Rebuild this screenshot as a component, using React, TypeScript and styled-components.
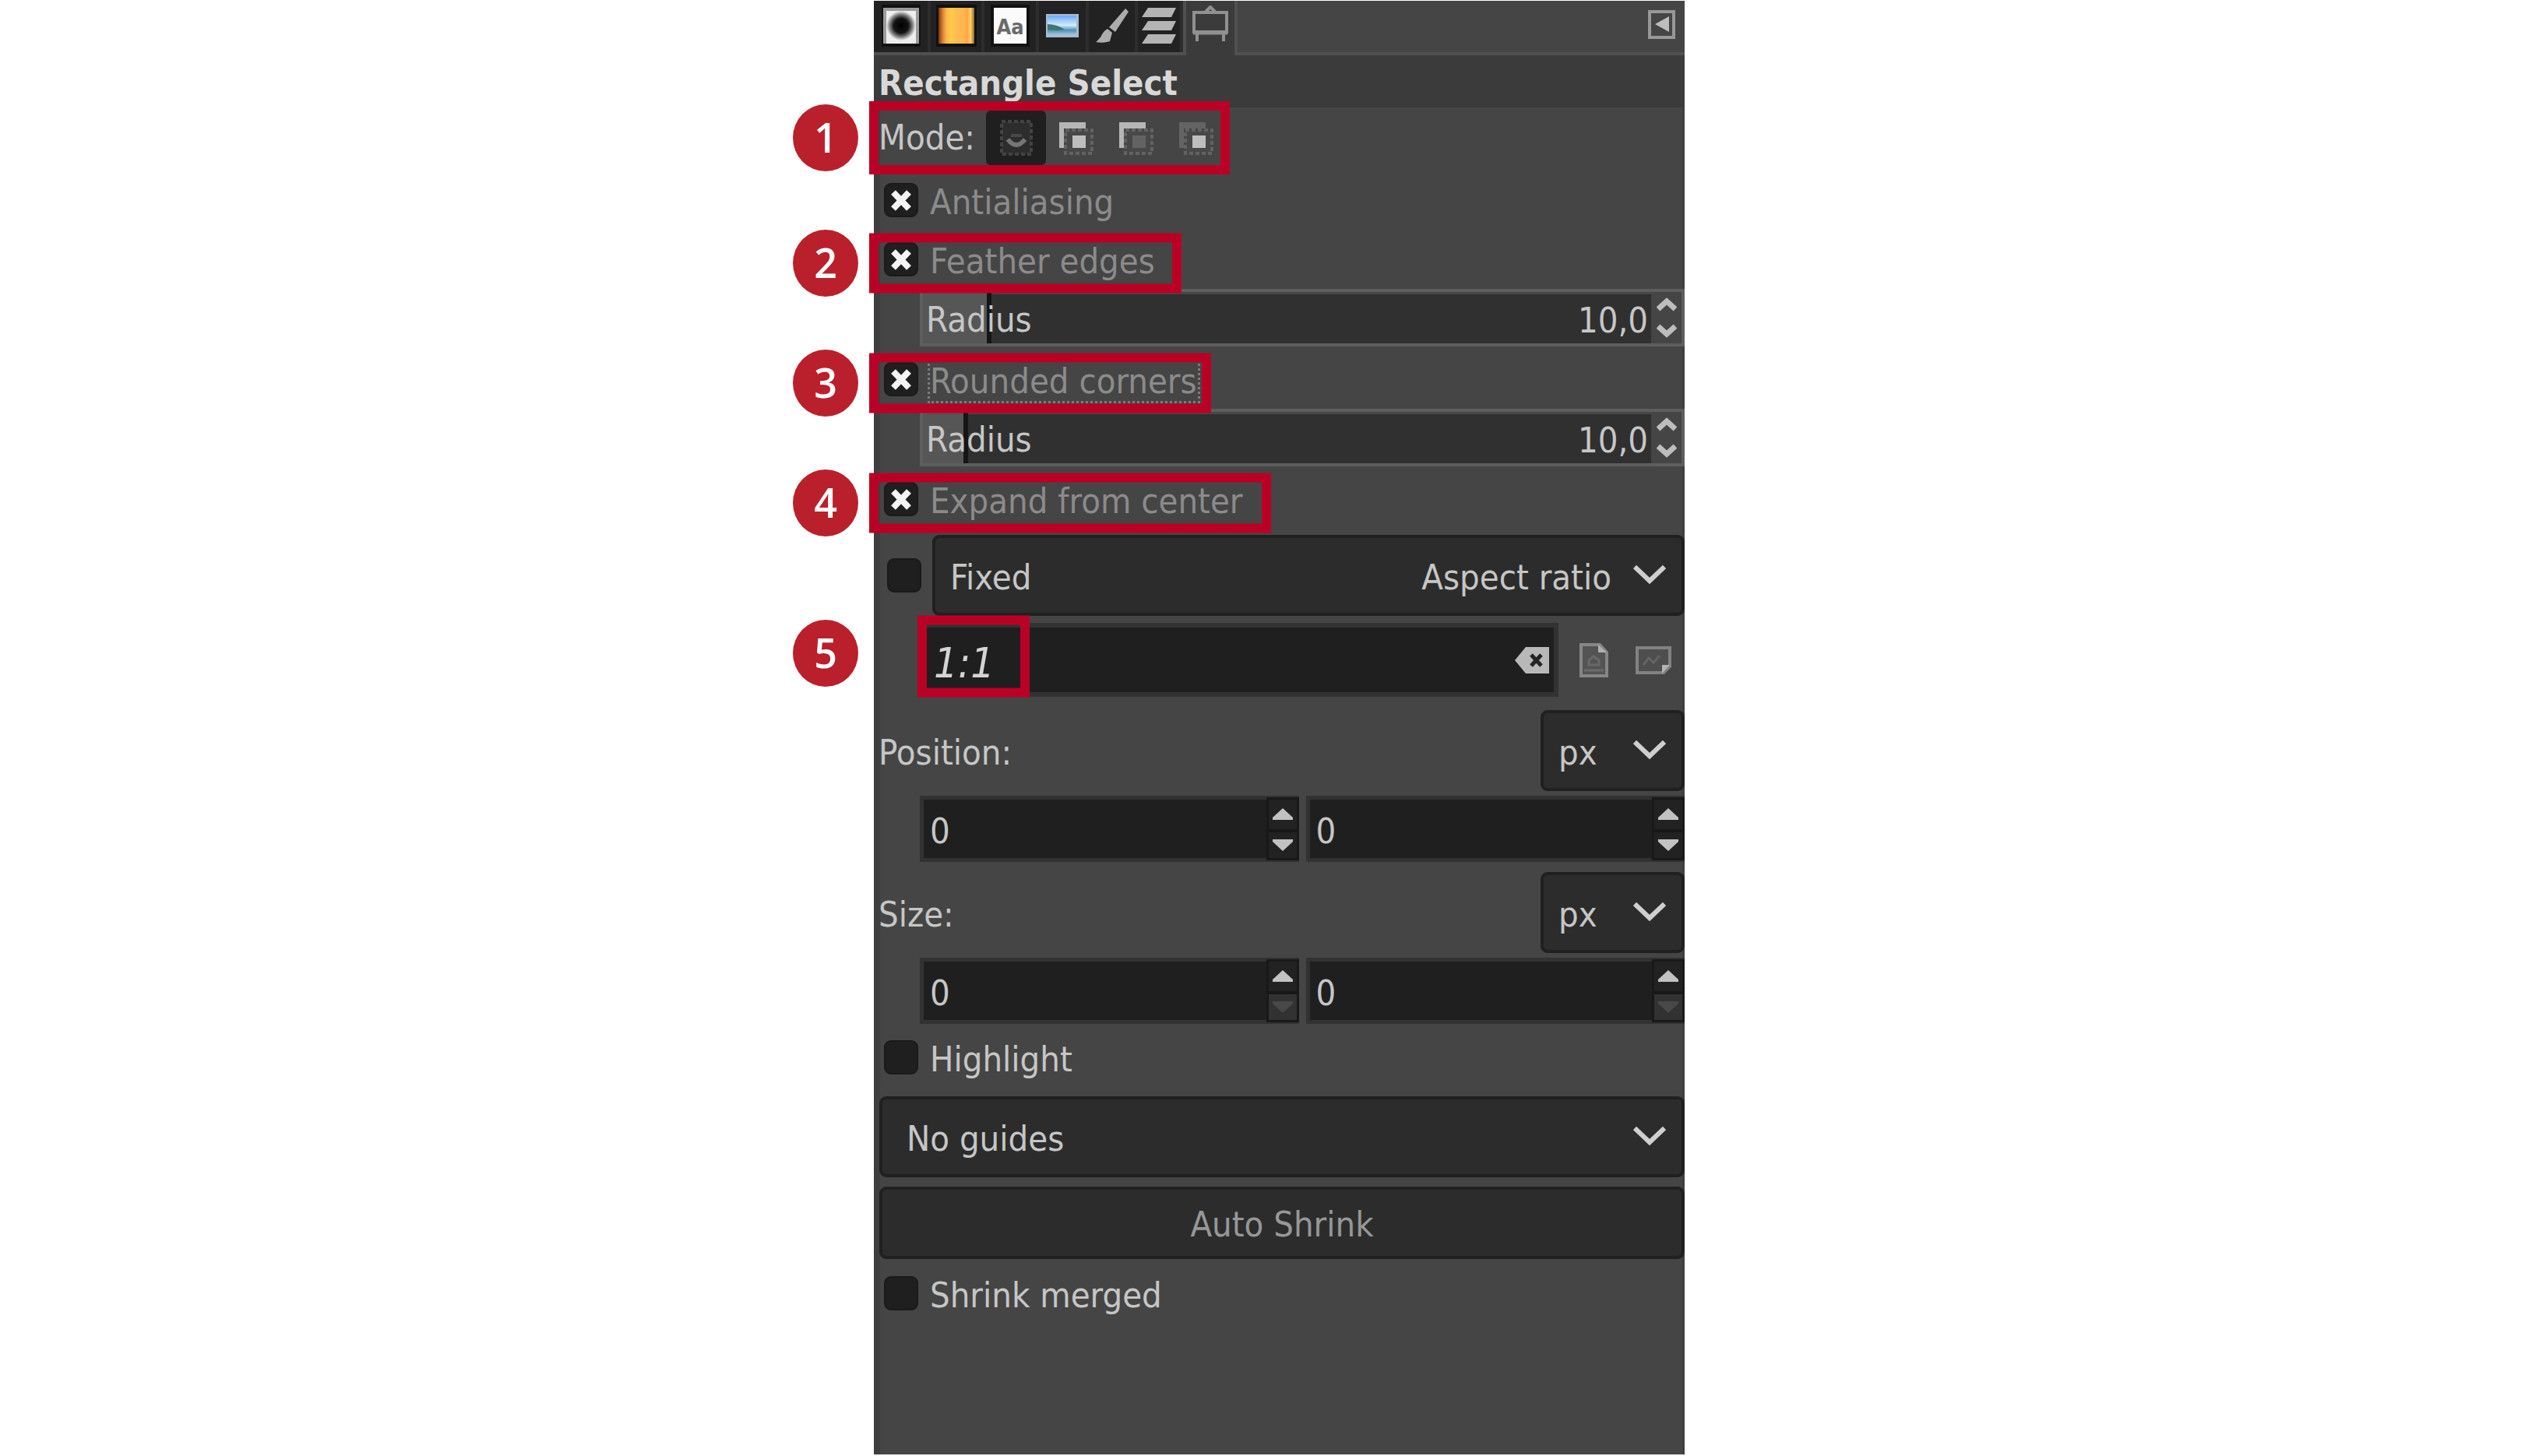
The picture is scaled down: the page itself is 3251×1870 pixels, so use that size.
import React, { useState } from 'react';
import styled, { createGlobalStyle, css } from 'styled-components';

const c = {
  panel: '#454545',
  header: '#3b3b3b',
  edge: '#3e3e3e',
  line: '#505050',
  tab: '#222222',
  button: '#2c2c2c',
  buttonEdge: '#202020',
  field: '#1f1f1f',
  fieldEdge: '#323232',
  text: '#c6c6c6',
  dim: '#8b8b8b',
  icon: '#b4b4b4',
  red: '#bb0026',
  badge: '#ba202c',
};

const Global = createGlobalStyle`
  *, *::before, *::after { box-sizing: border-box; }
  body { margin: 0; background: #fff; }
  body, button, input, select {
    font-family: "DejaVu Sans Condensed", "Open Sans", "Noto Sans", sans-serif;
    font-size: 45px;
    line-height: 52px;
    color: ${c.text};
  }
  button, input, select { margin: 0; padding: 0; border: 0; background: none; border-radius: 0; }
  svg { display: block; flex: none; }
`;

const Page = styled.main`
  display: grid;
  grid-template-columns: 1122fr 1041fr 1088fr;
  min-height: 100vh;
  padding: 1px 0 2px;
`;

const Panel = styled.section`
  grid-column: 2;
  display: flex;
  flex-direction: column;
  min-width: 0;
  background: ${c.panel};
  box-shadow: inset 8px 0 ${c.edge}, inset -3px 0 ${c.edge};
`;

const TabStrip = styled.nav`
  display: flex;
  align-items: stretch;
  height: 70px;
  background: ${c.panel};
  border-bottom: 4px solid ${c.line};
`;

const Tab = styled.button<{ $w: number; $active?: boolean }>`
  display: flex;
  align-items: center;
  justify-content: center;
  width: ${p => p.$w}px;
  padding-bottom: 2px;
  background: ${c.tab};
  border-right: 4px solid #2d2d2d;
  ${p => p.$active && css`
    margin-bottom: -4px;
    padding-bottom: 12px;
    background: ${c.header};
    border-left: 4px solid ${c.line};
    border-right-color: ${c.line};
  `}
`;

const MenuButton = styled.button`
  margin-left: auto;
  margin-right: 11px;
  padding-bottom: 4px;
`;

const Title = styled.h1`
  margin: 0;
  height: 67px;
  padding: 6px 0 0 6px;
  background: ${c.header};
  font-size: 45px;
  line-height: 60px;
  font-weight: 700;
  color: #d8d8d8;
`;

const Body = styled.form`
  display: flex;
  flex-direction: column;
  padding-left: 5px;
`;

const Row = styled.div<{ $h: number; $mt?: number; $pl?: number }>`
  position: relative;
  display: flex;
  align-items: center;
  height: ${p => p.$h}px;
  margin-top: ${p => p.$mt ?? 0}px;
  padding-left: ${p => p.$pl ?? 0}px;
`;

const Caption = styled.span<{ $dim?: boolean }>`
  padding-top: 6px;
  white-space: nowrap;
  color: ${p => (p.$dim ? c.dim : c.text)};
`;

const UnitCaption = styled.label`
  flex: 1;
  padding-top: 6px;
`;

const ModeGroup = styled.div`
  display: flex;
  margin-left: auto;
`;

const ModeArea = styled.div`
  display: flex;
  align-items: center;
  width: 446px;
`;

const ModeButton = styled.button`
  display: flex;
  align-items: center;
  justify-content: center;
  width: 77px;
  height: 70px;
  border-radius: 6px;
  &[aria-pressed='true'] { background: ${c.field}; }
`;

/* Callouts drawn over the panel */
const Outline = styled.span<{ $w: number; $h: number; $x?: number; $dy?: number }>`
  position: absolute;
  z-index: 2;
  left: ${p => p.$x ?? -11}px;
  top: calc(50% + ${p => p.$dy ?? 0}px);
  width: ${p => p.$w}px;
  height: ${p => p.$h}px;
  transform: translateY(-50%);
  border: 12px solid ${c.red};
  pointer-events: none;
`;

const Badge = styled.span<{ $dy?: number }>`
  position: absolute;
  left: -109px;
  top: calc(50% + ${p => p.$dy ?? 0}px);
  width: 84px;
  height: 86px;
  transform: translateY(-50%);
  border-radius: 50%;
  background: ${c.badge};
  color: #fff;
  font-family: "Open Sans", "Noto Sans", sans-serif;
  font-size: 52px;
  font-weight: 600;
  line-height: 84px;
  text-align: center;
`;

const CheckLabel = styled.label`
  display: flex;
  align-items: center;
  gap: 15px;
`;

const CheckBoxFrame = styled.span`
  position: relative;
  display: block;
  width: 44px;
  height: 44px;
  svg { position: absolute; inset: 0; pointer-events: none; }
`;

const CheckInput = styled.input`
  appearance: none;
  display: block;
  width: 44px;
  height: 44px;
  border-radius: 9px;
  background: ${c.field};
  border: 2px solid #1a1a1a;
`;

const FocusRing = styled.span`
  position: relative;
  display: flex;
  &::after {
    content: '';
    position: absolute;
    inset: 2px -4px -2px -3px;
    border: 3px dotted #7c7c7c;
  }
`;

const Slider = styled.div`
  position: relative;
  display: flex;
  align-items: center;
  height: 74px;
  margin-left: 54px;
  padding-left: 4px;
  background: #303030;
  border: 4px solid #5e5e5e;
  box-shadow: inset 0 3px #474747;
`;

const SliderFill = styled.span`
  position: absolute;
  left: 0;
  top: 0;
  bottom: 0;
  background: #565656;
  border-right: 6px solid #151515;
`;

const SliderLabel = styled.label`
  position: relative;
  padding-top: 6px;
`;

const SliderValue = styled.input`
  position: relative;
  flex: 1;
  min-width: 0;
  height: 66px;
  padding: 6px 4px 0 0;
  text-align: right;
`;

const Steppers = styled.div`
  display: flex;
  flex-direction: column;
  justify-content: center;
  gap: 14px;
  align-self: stretch;
  width: 39px;
  background: #454545;
  button { display: flex; justify-content: center; }
`;

const Combo = styled.div<{ $ml?: number; $w?: number }>`
  position: relative;
  display: flex;
  align-items: center;
  ${p => (p.$w ? `width: ${p.$w}px;` : 'flex: 1;')}
  height: 104px;
  margin-left: ${p => p.$ml ?? 0}px;
  background: ${c.button};
  border: 4px solid ${c.buttonEdge};
  border-radius: 9px;
  svg { position: absolute; right: 20px; top: 34px; pointer-events: none; }
`;

const ComboLabel = styled.label`
  padding: 6px 0 0 19px;
`;

const ComboSelect = styled.select<{ $right?: boolean; $pl?: number }>`
  appearance: none;
  flex: 1;
  min-width: 0;
  height: 96px;
  padding: 6px ${p => (p.$right ? 90 : 60)}px 0 ${p => p.$pl ?? 0}px;
  ${p => p.$right && 'text-align-last: right;'}
`;

const Entry = styled.div`
  display: flex;
  align-items: center;
  width: 820px;
  height: 95px;
  background: ${c.field};
  border: 6px solid ${c.fieldEdge};
`;

const RatioInput = styled.input`
  flex: 1;
  min-width: 0;
  height: 83px;
  padding: 8px 0 0 12px;
  font-size: 54px;
  font-style: italic;
  color: #d4d4d4;
`;

const IconButton = styled.button<{ $ml?: number; $mr?: number }>`
  display: flex;
  margin-left: ${p => p.$ml ?? 0}px;
  margin-right: ${p => p.$mr ?? 0}px;
`;

const Pair = styled.div`
  display: grid;
  grid-template-columns: 1fr 1fr;
  gap: 9px;
  height: 85px;
  margin: 6px 0 0 54px;
`;

const SpinBox = styled.div`
  display: flex;
  min-width: 0;
  background: ${c.field};
  border: 5px solid ${c.fieldEdge};
  border-right-width: 0;
`;

const SpinInput = styled.input`
  flex: 1;
  min-width: 0;
  padding: 6px 0 0 8px;
`;

const SpinButtons = styled.div`
  display: grid;
  grid-template-rows: 1fr 1fr;
  width: 42px;
  margin: -3px 0 -3px;
  border: 3px solid #191919;
  button { display: flex; align-items: center; justify-content: center; background: #222; }
  button + button { border-top: 4px solid #171717; }
  button:disabled { background: #323232; }
`;

const WideButton = styled.button`
  height: 93px;
  margin: 12px 0 0 2px;
  padding-top: 4px;
  background: ${c.button};
  border: 4px solid ${c.buttonEdge};
  border-radius: 9px;
  color: #979797;
`;

const Chevron = () => (
  <svg width="42" height="26" viewBox="0 0 42 26" fill="none" stroke="#cfcfcf" strokeWidth="6">
    <path d="M2 3 L21 21 L40 3" />
  </svg>
);

const Cross = () => (
  <svg width="44" height="44" viewBox="0 0 44 44" fill="none" stroke="#f4f4f4" strokeWidth="8">
    <path d="M12 12 L32 33 M32 12 L12 33" />
  </svg>
);

const Angle = ({ down }: { down?: boolean }) => (
  <svg width="26" height="19" viewBox="0 0 26 19" fill="none" stroke="#bdbdbd" strokeWidth="7">
    <path d={down ? 'M2 4 L13 14 L24 4' : 'M2 15 L13 5 L24 15'} />
  </svg>
);

const Triangle = ({ down, color = '#c2c2c2' }: { down?: boolean; color?: string }) => (
  <svg width="26" height="15" viewBox="0 0 26 15" fill={color}>
    <path d={down ? 'M0 0 H26 V3 L13 15 L0 3 Z' : 'M0 15 H26 V12 L13 0 L0 12 Z'} />
  </svg>
);

const BrushIcon = () => (
  <svg width="50" height="54" viewBox="0 0 50 54">
    <defs>
      <radialGradient id="brush">
        <stop offset="0" stopColor="#000" />
        <stop offset="0.5" stopColor="#141414" />
        <stop offset="0.75" stopColor="#777" />
        <stop offset="1" stopColor="#eee" />
      </radialGradient>
    </defs>
    <rect width="50" height="54" fill="#111" />
    <rect x="2" y="4" width="46" height="46" fill="#9c9c9c" />
    <rect x="6" y="8" width="38" height="42" fill="#eee" />
    <circle cx="25" cy="27" r="19" fill="url(#brush)" />
  </svg>
);

const PatternIcon = () => (
  <svg width="52" height="54" viewBox="0 0 52 54">
    <defs>
      <linearGradient id="wood">
        <stop offset="0" stopColor="#7a3a06" />
        <stop offset="0.12" stopColor="#dd813a" />
        <stop offset="0.22" stopColor="#ffb54a" />
        <stop offset="0.34" stopColor="#ffcd47" />
        <stop offset="0.5" stopColor="#ffbb50" />
        <stop offset="0.72" stopColor="#ffb74e" />
        <stop offset="0.8" stopColor="#ffa445" />
        <stop offset="0.9" stopColor="#ffd168" />
        <stop offset="1" stopColor="#8a6526" />
      </linearGradient>
    </defs>
    <rect width="52" height="54" fill="#111" />
    <rect x="3" y="4" width="46" height="46" fill="url(#wood)" />
  </svg>
);

const FontSwatch = styled.span`
  width: 50px;
  height: 54px;
  border: 4px solid #111;
  background: #fafafa;
  color: #6a6a6a;
  font-size: 27px;
  font-weight: 700;
  line-height: 50px;
  text-align: center;
`;

const ImageIcon = () => (
  <svg width="42" height="30" viewBox="0 0 42 30">
    <defs>
      <linearGradient id="sky" x2="0" y2="1">
        <stop offset="0" stopColor="#6ea6fa" />
        <stop offset="0.5" stopColor="#d3ebfb" />
        <stop offset="0.75" stopColor="#4f8fb8" />
        <stop offset="1" stopColor="#a9c6dd" />
      </linearGradient>
    </defs>
    <rect width="42" height="30" fill="#a8bccf" />
    <rect x="2" y="2" width="37" height="25" fill="url(#sky)" />
    <path d="M2 13 Q14 13 24 20 Q12 22 2 20 Z" fill="#40766f" />
  </svg>
);

const PaintIcon = () => (
  <svg width="42" height="44" viewBox="0 0 42 44" fill="#adadad">
    <path d="M38 0 L42 4 L25 30 L17 24 Z" />
    <path d="M15 26 L21 31 L18 42 Q10 45 0 43 Q6 38 8 33 Q11 28 15 26 Z" />
  </svg>
);

const LayersIcon = () => (
  <svg width="44" height="46" viewBox="0 0 44 46" fill={c.icon}>
    <path d="M8 0 H44 L38 12 H0 Z M8 17 H44 L38 29 H0 Z M8 34 H44 L38 46 H0 Z" />
  </svg>
);

const EaselIcon = () => (
  <svg width="48" height="46" viewBox="0 0 48 46" fill="none" stroke="#909090" strokeWidth="4">
    <path d="M3 9 H45 V34 H3 Z M7 36 V46 M41 36 V46" />
    <path d="M18 8 L24 2 L30 8" />
    <path d="M2 35 H46" strokeWidth="5" />
  </svg>
);

const MenuIcon = () => (
  <svg width="36" height="38" viewBox="0 0 36 38">
    <rect x="2" y="2" width="31" height="33" fill="none" stroke="#989898" strokeWidth="4" />
    <path d="M27 8 V28 L9 18 Z" fill="#bdbdbd" />
  </svg>
);

const modes = [
  { name: 'Replace the current selection', corner: 'none', square: 'none' },
  { name: 'Add to the current selection', corner: '#b6b6b6', square: '#bebebe' },
  { name: 'Subtract from the current selection', corner: '#b6b6b6', square: '#636363' },
  { name: 'Intersect with the current selection', corner: '#646464', square: '#bebebe' },
];

const ModeIcon = ({ index }: { index: number }) => {
  const m = modes[index];
  if (index === 0) {
    return (
      <svg width="46" height="48" viewBox="0 0 46 48" fill="none">
        <rect x="4" y="3" width="38" height="42" fill="#2d2d2d" stroke="#434343" strokeWidth="4" strokeDasharray="5 3" />
        <path d="M12 26 Q23 40 34 26" stroke="#767676" strokeWidth="6" />
        <path d="M16 21 H30" stroke="#484848" strokeWidth="4" />
      </svg>
    );
  }
  return (
    <svg width="46" height="48" viewBox="0 0 46 48">
      <path d="M1 4 H35 V12 H7 V37 H1 Z" fill={m.corner} />
      <rect x="9" y="14" width="34" height="30" fill="#484848" stroke="#626262" strokeWidth="4" strokeDasharray="5 3" />
      <rect x="18" y="21" width="17" height="16" fill={m.square} />
    </svg>
  );
};

const ClearIcon = () => (
  <svg width="44" height="38" viewBox="0 0 44 38">
    <path d="M0 19 L14 2 H44 V36 H14 Z" fill="#b8b8b8" />
    <path d="M21 12 L34 26 M34 12 L21 26" stroke="#242424" strokeWidth="5" />
  </svg>
);

const PortraitIcon = () => (
  <svg width="38" height="46" viewBox="0 0 38 46">
    <path d="M3 3 H27 L36 13 V43 H3 Z" fill="#545454" stroke="#868686" strokeWidth="4" />
    <path d="M25 3 V13 H36 Z" fill="#b0b0b0" />
    <path d="M13 29 H26 V23 L19 18 L13 23 Z" fill="none" stroke="#686868" strokeWidth="3" />
    <path d="M7 36 H32" stroke="#6c6c6c" strokeWidth="3" />
  </svg>
);

const LandscapeIcon = () => (
  <svg width="46" height="38" viewBox="0 0 46 38">
    <path d="M2 3 H44 V27 L36 35 H2 Z" fill="#4e4e4e" stroke="#828282" strokeWidth="4" />
    <path d="M44 25 H34 V36 Z" fill="#b4b4b4" />
    <path d="M10 25 L17 16 L23 22 L31 13" fill="none" stroke="#646464" strokeWidth="3" />
  </svg>
);

interface CheckProps {
  id: string;
  label: string;
  on?: boolean;
  dim?: boolean;
  focused?: boolean;
  mt?: number;
  children?: React.ReactNode;
}

const Check = ({ id, on }: { id: string; on?: boolean }) => {
  const [checked, setChecked] = useState(!!on);
  return (
    <CheckBoxFrame>
      <CheckInput id={id} type="checkbox" checked={checked} onChange={e => setChecked(e.target.checked)} />
      {checked && <Cross />}
    </CheckBoxFrame>
  );
};

const CheckRow = ({ id, label, on, dim, focused, mt, children }: CheckProps) => (
  <Row $h={76} $mt={mt} $pl={8}>
    <CheckLabel htmlFor={id}>
      <Check id={id} on={on} />
      {focused ? (
        <FocusRing><Caption $dim={dim}>{label}</Caption></FocusRing>
      ) : (
        <Caption $dim={dim}>{label}</Caption>
      )}
    </CheckLabel>
    {children}
  </Row>
);

const RadiusSlider = ({ id, fill }: { id: string; fill: number }) => (
  <Slider>
    <SliderFill style={{ width: `${fill}%` }} />
    <SliderLabel htmlFor={id}>Radius</SliderLabel>
    <SliderValue id={id} defaultValue="10,0" />
    <Steppers>
      <button type="button" aria-label="Increase radius"><Angle /></button>
      <button type="button" aria-label="Decrease radius"><Angle down /></button>
    </Steppers>
  </Slider>
);

const Spin = ({ label, locked }: { label: string; locked?: boolean }) => (
  <SpinBox>
    <SpinInput aria-label={label} defaultValue="0" />
    <SpinButtons>
      <button type="button" aria-label={`Increase ${label}`}><Triangle /></button>
      <button type="button" aria-label={`Decrease ${label}`} disabled={locked}>
        <Triangle down color={locked ? '#484848' : undefined} />
      </button>
    </SpinButtons>
  </SpinBox>
);

const UnitRow = ({ label, id, mt }: { label: string; id: string; mt: number }) => (
  <Row $h={104} $mt={mt} $pl={1}>
    <UnitCaption htmlFor={id}>{label}</UnitCaption>
    <Combo $w={185}>
      <ComboSelect id={id} $pl={19}><option>px</option></ComboSelect>
      <Chevron />
    </Combo>
  </Row>
);

export default function App() {
  const [mode, setMode] = useState(0);
  return (
    <>
      <Global />
      <Page>
        <Panel>
          <TabStrip>
            <Tab $w={73} aria-label="Brushes"><BrushIcon /></Tab>
            <Tab $w={69} aria-label="Patterns"><PatternIcon /></Tab>
            <Tab $w={70} aria-label="Fonts"><FontSwatch>Aa</FontSwatch></Tab>
            <Tab $w={64} aria-label="Images"><ImageIcon /></Tab>
            <Tab $w={63} aria-label="Paint dynamics"><PaintIcon /></Tab>
            <Tab $w={58} aria-label="Layers"><LayersIcon /></Tab>
            <Tab $w={70} $active aria-label="Tool options"><EaselIcon /></Tab>
            <MenuButton aria-label="Configure this tab"><MenuIcon /></MenuButton>
          </TabStrip>
          <Title>Rectangle Select</Title>
          <Body onSubmit={e => e.preventDefault()}>
            <Row $h={77} $pl={1}>
              <ModeArea>
                <span>Mode:</span>
                <ModeGroup role="group" aria-label="Mode">
                  {modes.map((m, i) => (
                    <ModeButton key={m.name} type="button" aria-label={m.name} aria-pressed={mode === i} onClick={() => setMode(i)}>
                      <ModeIcon index={i} />
                    </ModeButton>
                  ))}
                </ModeGroup>
              </ModeArea>
              <Outline $w={463} $h={94} />
              <Badge>1</Badge>
            </Row>
            <CheckRow id="antialiasing" label="Antialiasing" on dim mt={4} />
            <CheckRow id="feather" label="Feather edges" on dim>
              <Outline $w={401} $h={77} $dy={5} />
              <Badge $dy={5}>2</Badge>
            </CheckRow>
            <RadiusSlider id="feather-radius" fill={9} />
            <CheckRow id="rounded" label="Rounded corners" on dim focused mt={4}>
              <Outline $w={439} $h={77} $dy={5} />
              <Badge $dy={5}>3</Badge>
            </CheckRow>
            <RadiusSlider id="corner-radius" fill={6} />
            <CheckRow id="expand" label="Expand from center" on dim mt={4}>
              <Outline $w={516} $h={77} $dy={5} />
              <Badge $dy={5}>4</Badge>
            </CheckRow>
            <Row $h={104} $mt={8} $pl={12}>
              <Check id="fixed" />
              <Combo $ml={14}>
                <ComboLabel htmlFor="fixed">Fixed</ComboLabel>
                <ComboSelect $right aria-label="Fixed constraint"><option>Aspect ratio</option></ComboSelect>
                <Chevron />
              </Combo>
            </Row>
            <Row $h={95} $mt={9} $pl={54}>
              <Entry>
                <RatioInput aria-label="Aspect ratio" defaultValue="1:1" />
                <IconButton type="button" aria-label="Clear" $mr={6}><ClearIcon /></IconButton>
              </Entry>
              <IconButton type="button" aria-label="Portrait" $ml={26}><PortraitIcon /></IconButton>
              <IconButton type="button" aria-label="Landscape" $ml={35}><LandscapeIcon /></IconButton>
              <Outline $w={144} $h={105} $x={51} $dy={-5} />
              <Badge $dy={-9}>5</Badge>
            </Row>
            <UnitRow label="Position:" id="position-unit" mt={17} />
            <Pair>
              <Spin label="Position X" />
              <Spin label="Position Y" />
            </Pair>
            <UnitRow label="Size:" id="size-unit" mt={13} />
            <Pair>
              <Spin label="Width" locked />
              <Spin label="Height" locked />
            </Pair>
            <CheckRow id="highlight" label="Highlight" mt={5} />
            <Row $h={104} $mt={12} $pl={2}>
              <Combo>
                <ComboSelect $pl={31} aria-label="Guides"><option>No guides</option></ComboSelect>
                <Chevron />
              </Combo>
            </Row>
            <WideButton type="button">Auto Shrink</WideButton>
            <CheckRow id="shrink-merged" label="Shrink merged" mt={6} />
          </Body>
        </Panel>
      </Page>
    </>
  );
}
